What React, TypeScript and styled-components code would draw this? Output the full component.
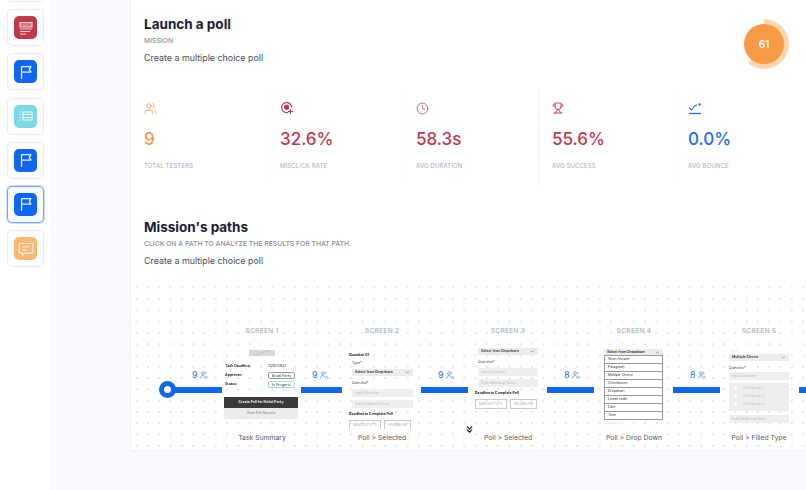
import React from "react";
import styled, { createGlobalStyle } from "styled-components";
import { ChevronsDown, Clock, Trophy, Users, ChevronDown, ChevronUp } from "lucide-react";

const GlobalStyle = createGlobalStyle`
  html, body {
    margin: 0;
    padding: 0;
    width: 806px;
    height: 490px;
    overflow: hidden;
    background: #f8f9fc;
    font-family: Inter, "Liberation Sans", sans-serif;
  }
`;

const FlagIcon = () => (
  <svg width="16" height="16" viewBox="0 0 18 18" fill="none" stroke="#e8f0ff" strokeWidth="1.4">
    <path d="M4 16.5V3h10.5l-1.8 3 1.8 3.2H4" strokeLinejoin="round" />
  </svg>
);

const SummaryIcon = () => (
  <svg width="18" height="18" viewBox="0 0 18 18" fill="none" stroke="#f3cdd3" strokeWidth="1.2">
    <path d="M3 3.5h12v4.5H3z" fill="#f3cdd3" fillOpacity="0.45" />
    <path d="M3 10h12M3 12.5h10M3 15h6" />
  </svg>
);

const ListIcon = () => (
  <svg width="18" height="18" viewBox="0 0 18 18" fill="none" stroke="#e6f9fc" strokeWidth="1.2">
    <path d="M6 5h9v8H6zM6 7.5h9M6 10.5h9M2.5 5h1.5M2.5 7.5h1.5M2.5 10.5h1.5M2.5 13h1.5" />
  </svg>
);

const ChatIcon = () => (
  <svg width="18" height="18" viewBox="0 0 18 18" fill="none" stroke="#fff1df" strokeWidth="1.2">
    <path d="M3 3.5h12a.8.8 0 0 1 .8.8v8a.8.8 0 0 1-.8.8H8l-2.5 2v-2H3a.8.8 0 0 1-.8-.8v-8a.8.8 0 0 1 .8-.8z" />
    <path d="M5.5 7h7M5.5 9.8h4" />
  </svg>
);

const TargetIcon = () => (
  <svg width="14" height="14" viewBox="0 0 14 14" fill="none" stroke="#c0394d" strokeWidth="1.2">
    <path d="M8.4 11.2A5 5 0 1 1 11.6 6.4" />
    <circle cx="6.5" cy="6.2" r="2" fill="#c0394d" />
    <path d="M10.5 8v5M8 10.5h5" />
  </svg>
);

const BounceIcon = () => (
  <svg width="14" height="14" viewBox="0 0 14 14" fill="none" stroke="#1f6fe8" strokeWidth="1.1">
    <path d="M1 12.5h12" strokeWidth="1.3" />
    <path d="M1 6.5l2.6 2.5 3-4 2.4-.9" />
    <circle cx="11.6" cy="3.4" r="0.7" fill="#1f6fe8" />
  </svg>
);

const PersonIcon = () => (
  <svg width="8" height="8" viewBox="0 0 8 8" fill="none" stroke="#1f6fe8" strokeWidth="0.6">
    <circle cx="3" cy="2.2" r="1.4" />
    <path d="M.5 7.5C.8 5.5 1.8 4.6 3 4.6s2.2.9 2.5 2.9M5.3 1c1 .3 1 2 0 2.4M6.2 4.8c.7.5 1 1.4 1.2 2.7" />
  </svg>
);

const tiles = [
  { tone: "#c0394d", icon: <SummaryIcon />, active: false },
  { tone: "#0f66f2", icon: <FlagIcon />, active: false },
  { tone: "#7bd8e6", icon: <ListIcon />, active: false },
  { tone: "#0f66f2", icon: <FlagIcon />, active: false },
  { tone: "#0f66f2", icon: <FlagIcon />, active: true },
  { tone: "#fbb871", icon: <ChatIcon />, active: false },
];

const stats = [
  { icon: <Users size={13} strokeWidth={1.4} />, tone: "#f39a48", value: "9", label: "TOTAL TESTERS" },
  { icon: <TargetIcon />, tone: "#c0394d", value: "32.6%", label: "MISCLICK RATE" },
  { icon: <Clock size={13} strokeWidth={1.4} />, tone: "#c0394d", value: "58.3s", label: "AVG DURATION" },
  { icon: <Trophy size={12} strokeWidth={1.8} />, tone: "#c0394d", value: "55.6%", label: "AVG SUCCESS" },
  { icon: <BounceIcon />, tone: "#1f6fe8", value: "0.0%", label: "AVG BOUNCE" },
];

const links = [
  { x: 44, width: 47, countX: 61, count: 9 },
  { x: 170, width: 41, countX: 181, count: 9 },
  { x: 290, width: 47, countX: 307, count: 9 },
  { x: 416, width: 47, countX: 433, count: 8 },
  { x: 542, width: 47, countX: 559, count: 8 },
  { x: 668, width: 10, countX: 0, count: 0 },
];

const heads = [
  { x: 131, label: "SCREEN 1", caption: "Task Summary" },
  { x: 251, label: "SCREEN 2", caption: "Poll > Selected" },
  { x: 377, label: "SCREEN 3", caption: "Poll > Selected" },
  { x: 503, label: "SCREEN 4", caption: "Poll > Drop Down" },
  { x: 628, label: "SCREEN 5", caption: "Poll > Filled Type" },
];

const dropdownItems = ["Short Answer", "Paragraph", "Multiple Choice", "Checkboxes", "Dropdown", "Linear scale", "Date", "Time"];

const DeadlineFields = () => (
  <DateRow>
    <DateBox $width={32}>MM/DD/YYYY</DateBox>
    <DateBox $width={27}>HH:MM PM</DateBox>
  </DateRow>
);

const App: React.FC = () => {
  return (
    <Page>
      <GlobalStyle />
      <Sidebar>
        <TileStack>
          <Tile />
          {tiles.map((tile, index) => (
            <Tile key={index} $active={tile.active}>
              <TileIcon $tone={tile.tone}>{tile.icon}</TileIcon>
            </Tile>
          ))}
        </TileStack>
      </Sidebar>
      <Main>
        <Card>
          <Intro>
            <div>
              <Title>Launch a poll</Title>
              <Eyebrow>MISSION</Eyebrow>
              <Description>Create a multiple choice poll</Description>
            </div>
            <ScoreRing>
              <ScoreValue>61</ScoreValue>
            </ScoreRing>
          </Intro>
          <StatsRow>
            {stats.map((stat) => (
              <StatCell key={stat.label}>
                <StatIcon $tone={stat.tone}>{stat.icon}</StatIcon>
                <StatValue $tone={stat.tone}>{stat.value}</StatValue>
                <StatLabel>{stat.label}</StatLabel>
              </StatCell>
            ))}
          </StatsRow>
          <PathsIntro>
            <Title>Mission's paths</Title>
            <Eyebrow>CLICK ON A PATH TO ANALYZE THE RESULTS FOR THAT PATH.</Eyebrow>
            <Description>Create a multiple choice poll</Description>
          </PathsIntro>
          <Canvas>
            <StartDot />
            {links.map((link) => (
              <React.Fragment key={link.x}>
                <Link $x={link.x} $width={link.width} />
                {link.count > 0 && (
                  <Count $x={link.countX}>
                    {link.count} <PersonIcon />
                  </Count>
                )}
              </React.Fragment>
            ))}
            {heads.map((head) => (
              <React.Fragment key={head.label}>
                <ScreenLabel $x={head.x}>{head.label}</ScreenLabel>
                <Caption $x={head.x}>{head.caption}</Caption>
              </React.Fragment>
            ))}

            <Screen $x={93} $y={65} $width={75} $height={75}>
              <Hero />
              <InfoRow>
                <strong>Task Deadline:</strong>
                <span>12/10/2022</span>
              </InfoRow>
              <InfoRow>
                <strong>Approver:</strong>
                <Chip $tone="#9a9a9a">Bridal Party</Chip>
              </InfoRow>
              <InfoRow>
                <strong>Status:</strong>
                <Chip $tone="#9fdcf0">In Progress</Chip>
              </InfoRow>
              <DarkButton>Create Poll for Bridal Party</DarkButton>
              <LightButton>View Poll Results</LightButton>
            </Screen>

            <Screen $x={218} $y={64} $width={64} $height={80}>
              <MiniHeading>Question 01</MiniHeading>
              <MiniLabel>Type*</MiniLabel>
              <Select>
                Select from Dropdown <ChevronDown size={5} />
              </Select>
              <MiniLabel>Question*</MiniLabel>
              <InputBox>Input Question</InputBox>
              <InputBox>Add Additional Notes</InputBox>
              <MiniHeading>Deadline to Complete Poll</MiniHeading>
              <DeadlineFields />
            </Screen>

            <Screen $x={344} $y={63} $width={63} $height={63}>
              <Select>
                Select from Dropdown <ChevronDown size={5} />
              </Select>
              <MiniLabel>Question*</MiniLabel>
              <InputBox>Input Question</InputBox>
              <InputBox>Add Additional Notes</InputBox>
              <MiniHeading>Deadline to Complete Poll</MiniHeading>
              <DeadlineFields />
            </Screen>

            <Screen $x={470} $y={64} $width={62} $height={80}>
              <Select>
                Select from Dropdown <ChevronUp size={5} />
              </Select>
              <DropList>
                {dropdownItems.map((item) => (
                  <DropItem key={item}>{item}</DropItem>
                ))}
              </DropList>
              <FaintLabel>Question*</FaintLabel>
            </Screen>

            <Screen $x={595} $y={63} $width={63} $height={76}>
              <FaintLabel>Type*</FaintLabel>
              <Select>
                Multiple Choice <ChevronDown size={5} />
              </Select>
              <TightLabel>Question*</TightLabel>
              <InputBox>Input Question</InputBox>
              <OptionsBlock>
                {["Add Option 1", "Add Option 2", "Add Option 3"].map((option) => (
                  <OptionRow key={option}>
                    <Radio />
                    {option}
                  </OptionRow>
                ))}
              </OptionsBlock>
              <InputBox>Add Additional Notes</InputBox>
            </Screen>

            <MoreArrow>
              <ChevronsDown size={11} strokeWidth={2.5} color="#222" />
            </MoreArrow>
          </Canvas>
        </Card>
      </Main>
    </Page>
  );
};

const Page = styled.div`
  display: flex;
  width: 806px;
  height: 490px;
  overflow: hidden;
`;

const Sidebar = styled.aside`
  flex: 0 0 50px;
  background: #fff;
  overflow: hidden;
`;

const TileStack = styled.div`
  display: flex;
  flex-direction: column;
  gap: 7.2px;
  margin-top: -35px;
  padding-left: 7px;
`;

const Tile = styled.div<{ $active?: boolean }>`
  display: flex;
  align-items: center;
  justify-content: center;
  box-sizing: border-box;
  width: 37px;
  height: 37px;
  border-radius: 5px;
  background: ${(props) => (props.$active ? "#f4f8ff" : "#fff")};
  border: 1px solid ${(props) => (props.$active ? "#78a6f5" : "#e9ebf0")};
  box-shadow: ${(props) => (props.$active ? "0 0 0 1px #c9dcfb" : "none")};
`;

const TileIcon = styled.div<{ $tone: string }>`
  display: flex;
  align-items: center;
  justify-content: center;
  width: 23px;
  height: 23px;
  border-radius: 5px;
  background: ${(props) => props.$tone};
`;

const Main = styled.main`
  flex: 1;
  padding-left: 80px;
  min-width: 0;
`;

const Card = styled.section`
  box-sizing: border-box;
  width: 680px;
  height: 451px;
  background: #fff;
  border-left: 1px solid #eef0f4;
  border-bottom: 1px solid #eef0f4;
`;

const Intro = styled.div`
  display: flex;
  justify-content: space-between;
  align-items: flex-start;
  height: 88px;
  padding: 14px 21px 0 13px;
  box-sizing: border-box;
`;

const Title = styled.h2`
  margin: 0;
  font-size: 13.5px;
  line-height: 20px;
  font-weight: 700;
  color: #1b2033;
`;

const Eyebrow = styled.div`
  margin-top: 1.5px;
  font-size: 6.8px;
  line-height: 9px;
  font-weight: 500;
  color: #8a8f9c;
`;

const Description = styled.p`
  margin: 6.5px 0 0;
  font-size: 8.9px;
  line-height: 14px;
  color: #474c5c;
`;

const ScoreRing = styled.div`
  display: flex;
  align-items: center;
  justify-content: center;
  width: 50px;
  height: 50px;
  margin-top: 5px;
  border-radius: 50%;
  background: conic-gradient(#fbd5b0 0 61%, transparent 0);
`;

const ScoreValue = styled.div`
  display: flex;
  align-items: center;
  justify-content: center;
  width: 40px;
  height: 40px;
  border-radius: 50%;
  background: #f79a46;
  color: #fff;
  font-size: 10px;
  font-weight: 600;
`;

const StatsRow = styled.div`
  display: grid;
  grid-template-columns: repeat(5, 136px);
  height: 97px;
`;

const StatCell = styled.div`
  box-sizing: border-box;
  padding: 13px 0 0 13px;
  border-right: 1px solid #f9fafb;

  &:nth-child(3) {
    border-right-color: #f2f3f6;
  }
  &:last-child {
    border-right: 0;
  }
`;

const StatIcon = styled.div<{ $tone: string }>`
  display: flex;
  align-items: center;
  height: 14px;
  color: ${(props) => props.$tone};
`;

const StatValue = styled.div<{ $tone: string }>`
  margin-top: 13px;
  font-size: 17px;
  line-height: 22px;
  font-weight: 500;
  color: ${(props) => props.$tone};
`;

const StatLabel = styled.div`
  margin-top: 12px;
  font-size: 6px;
  line-height: 8px;
  letter-spacing: 0.15px;
  color: #a7abb6;
`;

const PathsIntro = styled.div`
  height: 100px;
  padding: 32px 0 0 13px;
  box-sizing: border-box;
`;

const Canvas = styled.div`
  position: relative;
  height: 165px;
  overflow: hidden;
  background-image: radial-gradient(circle, #e2e4ea 0.7px, transparent 1px);
  background-size: 11.3px 11.3px;
  background-position: 0 -3px;
`;

const StartDot = styled.div`
  position: absolute;
  left: 28px;
  top: 96px;
  box-sizing: border-box;
  width: 17px;
  height: 17px;
  border-radius: 50%;
  border: 5.5px solid #0f66f2;
  background: #fff;
`;

const Link = styled.div<{ $x: number; $width: number }>`
  position: absolute;
  left: ${(props) => props.$x}px;
  top: 102px;
  width: ${(props) => props.$width}px;
  height: 5.5px;
  background: #0f66f2;
`;

const Count = styled.div<{ $x: number }>`
  position: absolute;
  left: ${(props) => props.$x}px;
  top: 85px;
  display: flex;
  align-items: center;
  gap: 2px;
  font-size: 9px;
  line-height: 10px;
  color: #1f6fe8;
`;

const ScreenLabel = styled.div<{ $x: number }>`
  position: absolute;
  left: ${(props) => props.$x}px;
  top: 41px;
  transform: translateX(-50%);
  font-size: 6.6px;
  line-height: 10px;
  font-weight: 600;
  letter-spacing: 0.3px;
  white-space: nowrap;
  color: #b5bac4;
`;

const Caption = styled.div<{ $x: number }>`
  position: absolute;
  left: ${(props) => props.$x}px;
  top: 148px;
  transform: translateX(-50%);
  font-size: 6.8px;
  line-height: 10px;
  white-space: nowrap;
  color: #565b66;
`;

const Screen = styled.div<{ $x: number; $y: number; $width: number; $height: number }>`
  position: absolute;
  left: ${(props) => props.$x}px;
  top: ${(props) => props.$y}px;
  width: ${(props) => props.$width}px;
  height: ${(props) => props.$height}px;
  overflow: hidden;
  font-size: 3.5px;
  line-height: 5px;
  color: #333;
  filter: blur(0.3px);
`;

const Hero = styled.div`
  width: 26px;
  height: 6px;
  margin: 0 auto 6px;
  background: linear-gradient(160deg, #d8d8d8 45%, #bcbcbc 50%, #d8d8d8 55%);
`;

const InfoRow = styled.div`
  display: grid;
  grid-template-columns: 43px 1fr;
  align-items: center;
  height: 9px;
  padding-left: 1px;

  strong {
    font-size: 3.6px;
  }
`;

const Chip = styled.span<{ $tone: string }>`
  width: 27px;
  height: 7px;
  line-height: 6px;
  box-sizing: border-box;
  border: 0.6px solid ${(props) => props.$tone};
  border-radius: 2px;
  text-align: center;
`;

const DarkButton = styled.div`
  margin-top: 8px;
  height: 11px;
  width: 74px;
  line-height: 11px;
  font-weight: 700;
  text-align: center;
  background: #3b3b3b;
  color: #eee;
`;

const LightButton = styled(DarkButton)`
  margin-top: 0;
  background: #ececec;
  color: #a8a8a8;
`;

const MiniHeading = styled.div`
  margin-top: 4px;
  font-weight: 700;
  color: #222;

  & + div {
    margin-top: 3px;
  }
`;

const MiniLabel = styled.div`
  margin: 3px 0 3px 3px;
  color: #444;
`;

const TightLabel = styled.div`
  margin: 0 0 0.5px 3px;
  color: #444;
`;

const Select = styled.div`
  display: flex;
  align-items: center;
  justify-content: space-between;
  box-sizing: border-box;
  height: 7px;
  margin: 0 0 5px 3px;
  padding: 0 3px;
  background: #ececec;
  font-weight: 600;
`;

const InputBox = styled.div`
  box-sizing: border-box;
  height: 8px;
  margin: 0 0 3px 3px;
  padding: 0 3px;
  line-height: 8px;
  background: #efefef;
  color: #b9b9b9;
`;

const DateRow = styled.div`
  display: flex;
  gap: 3px;
  margin-top: 2px;
`;

const DateBox = styled.div<{ $width: number }>`
  box-sizing: border-box;
  width: ${(props) => props.$width}px;
  height: 10px;
  line-height: 8px;
  padding-left: 3px;
  border: 0.8px solid #c9c9c9;
  color: #aaa;
`;

const DropList = styled.div`
  display: flex;
  flex-direction: column;
  margin: -6px 0 0 3px;
  border: 0.8px solid #9a9a9a;
  border-top: 0;
`;

const DropItem = styled.div`
  box-sizing: border-box;
  height: 8px;
  line-height: 7px;
  padding-left: 3px;
  border-top: 0.6px solid #9a9a9a;
  background: #fff;
  font-size: 3.4px;
`;

const FaintLabel = styled.div`
  margin: 1px 0 0 3px;
  color: #ddd;
`;

const OptionsBlock = styled.div`
  display: flex;
  flex-direction: column;
  gap: 3px;
  box-sizing: border-box;
  height: 28px;
  margin: 0 0 4px 3px;
  padding: 3px 5px;
  background: #eeeeee;
  color: #bbb;
`;

const OptionRow = styled.div`
  display: flex;
  align-items: center;
  gap: 6px;
  height: 5px;
`;

const Radio = styled.span`
  width: 3px;
  height: 3px;
  border-radius: 50%;
  background: #fff;
`;

const MoreArrow = styled.div`
  position: absolute;
  left: 333px;
  top: 139px;
  display: flex;
`;

export default App;
